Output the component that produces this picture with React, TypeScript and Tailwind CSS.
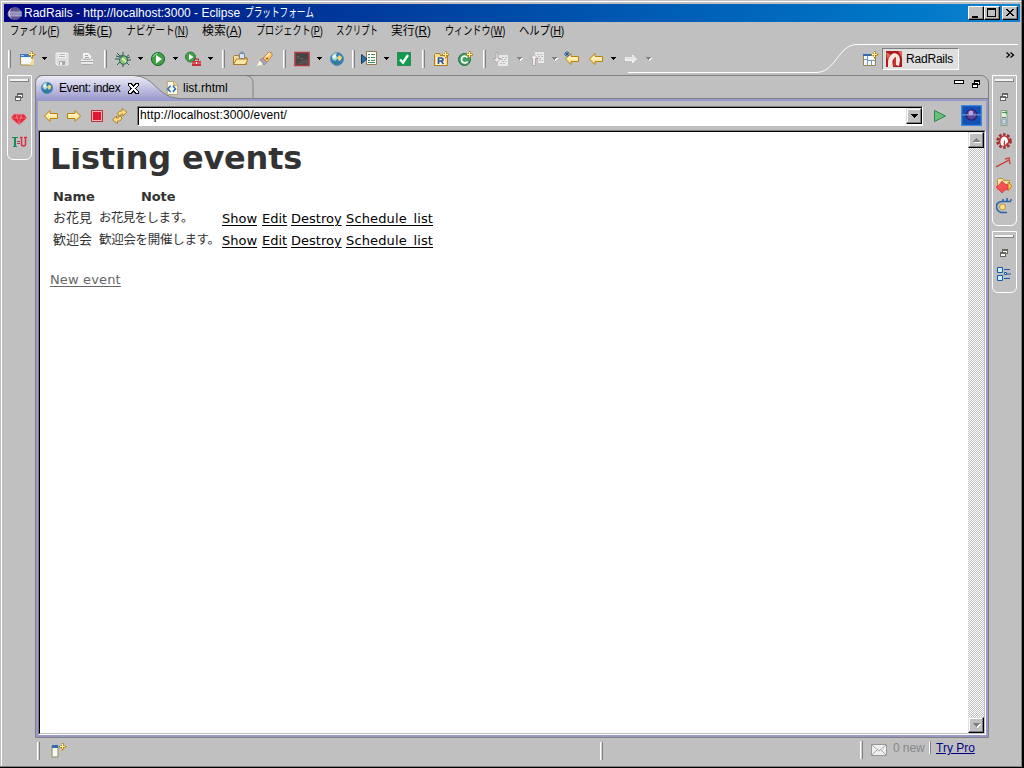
import type { ReactNode } from "react"
import clsx from "clsx"

const events = [
  { name: "お花見", note: "お花見をします。", fit: "tracking-[-0.6px]" },
  { name: "歓迎会", note: "歓迎会を開催します。", fit: "tracking-[-0.3px]" },
]

const menus = [
  { label: "ファイル", key: "F", box: "w-[63px]", fit: "scale-x-[0.78]" },
  { label: "編集", key: "E", box: "w-[53px]", fit: "scale-x-[0.98]" },
  { label: "ナビゲート", key: "N", box: "w-[76px]", fit: "scale-x-[0.81]" },
  { label: "検索", key: "A", box: "w-[54px]", fit: "scale-x-[0.99]" },
  { label: "プロジェクト", key: "P", box: "w-[80px]", fit: "scale-x-[0.76]" },
  { label: "スクリプト", key: "", box: "w-[55px]", fit: "scale-x-[0.7]" },
  { label: "実行", key: "R", box: "w-[54px]", fit: "scale-x-[0.98]" },
  { label: "ウィンドウ", key: "W", box: "w-[74px]", fit: "scale-x-[0.76]" },
  { label: "ヘルプ", key: "H", box: "w-[60px]", fit: "scale-x-[0.86]" },
]

function Icon({ className, size = 16, children }: { className?: string; size?: number; children: ReactNode }) {
  return (
    <svg width={size} height={size} viewBox="0 0 16 16" fill="none" className={clsx("shrink-0", className)}>
      {children}
    </svg>
  )
}

function Drop({ className, off }: { className?: string; off?: boolean }) {
  return (
    <svg width="6" height="4" viewBox="0 0 6 4" shapeRendering="crispEdges" className={clsx("-mr-px shrink-0", className)}>
      {off && <path d="M1 1h5v1h-1v1h-1v1h-1v-1h-1z" fill="#fff" />}
      <path d="M0 0h5v1h-1v1h-1v1h-1v-1h-1v-1h-1z" fill={off ? "#808080" : "#000"} />
    </svg>
  )
}

function Sep({ className }: { className?: string }) {
  return <div className={clsx("h-[18px] w-[3px] shrink-0 border-r border-l border-r-[#808080] border-l-white bg-[#d0d0d0]", className)} />
}

// small four-point sparkle used on the "new ..." icons
function Spark({ x, y }: { x: number; y: number }) {
  return (
    <g transform={`translate(${x} ${y})`} shapeRendering="crispEdges">
      <path d="M3 0h1v2h1v1h2v1h-2v1h-1v2h-1v-2h-1v-1h-2v-1h2v-1h1z" fill="#a87800" stroke="#b8860b" strokeWidth=".6" />
      <path d="M3 1h1v2h2v1h-2v2h-1v-2h-2v-1h2z" fill="#fff3b0" />
    </g>
  )
}

function NewIcon({ className }: { className?: string }) {
  return (
    <Icon className={className}>
      <path d="M.5 3.500h12v10.500h-12z" fill="#e8f6ff" stroke="#b08a3c" />
      <path d="M0 3h11v3H0z" fill="#3c78c8" />
      <path d="M1 4h3v1H1z" fill="#a8d0f8" />
      <path d="M2 7h9v6H3z" fill="#fff" opacity=".8" />
      <path d="M8 14q4-2 4-6l2-1v7z" fill="#f0dc98" />
      <Spark x={8} y={0} />
    </Icon>
  )
}

function SaveIcon({ className }: { className?: string }) {
  return (
    <Icon className={className}>
      <path d="M2 2h12v12H3l-1-1z" fill="#dcdcdc" stroke="#eee" />
      <path d="M4 2h8v5H4z" fill="#f4f4f4" />
      <path d="M5 3.500h6M5 5.500h6" stroke="#b4b4b4" />
      <path d="M5 10h6v4H5z" fill="#a8a8a8" />
      <path d="M6 11h2v3H6z" fill="#f4f4f4" />
    </Icon>
  )
}

function PrintIcon({ className }: { className?: string }) {
  return (
    <Icon className={className}>
      <path d="M4.500 7.500v-5h5l2 2v3" fill="#eee" stroke="#f8f8f8" />
      <path d="M6 4.500h3M6 6.500h4" stroke="#aaa" />
      <path d="M2 8h12v5H2z" fill="#e8e8e8" />
      <path d="M2 10.500h12M3 13.500h10" stroke="#a8a8a8" />
      <path d="M4 8.500h8" stroke="#b8b8b8" />
    </Icon>
  )
}

function BugIcon({ className }: { className?: string }) {
  return (
    <Icon className={className}>
      <path d="M5 5L2 2M8 5V1M11 6l3-2M4 8H0M12 9h4M5 11l-3 3M8 12v4M11 11l3 3M5 6L1 5M12 7l3-1" stroke="#24544c" />
      <ellipse cx="8.500" cy="9" rx="3.800" ry="4.200" fill="#8cc878" stroke="#245c54" />
      <path d="M7 7l4 4" stroke="#e8f8b0" strokeWidth="1.500" />
      <circle cx="6" cy="5.500" r="1.700" fill="#3c8078" />
    </Icon>
  )
}

function RunIcon({ className }: { className?: string }) {
  return (
    <Icon className={className}>
      <circle cx="8" cy="8" r="6.600" fill="#43a047" stroke="#1c6b30" />
      <path d="M3 6q1-3 5-4" stroke="#98d898" />
      <path d="M6 4l6 4-6 4.500z" fill="#fff" />
    </Icon>
  )
}

function ExternalIcon({ className }: { className?: string }) {
  return (
    <Icon className={className}>
      <circle cx="5.500" cy="6" r="5" fill="#43a047" stroke="#2c7b40" />
      <path d="M4 3l4.500 3L4 9z" fill="#fff" />
      <path d="M9.500 9.500V8h4v1.500" stroke="#a01820" />
      <path d="M7 10h9v5H7z" fill="#c83038" />
      <path d="M7 12h9" stroke="#f08c8c" />
      <path d="M11 11h1v2h-1z" fill="#fff" />
    </Icon>
  )
}

function FolderIcon({ className }: { className?: string }) {
  return (
    <Icon className={className}>
      <path d="M1.500 13.500V5.500l1-1h4l1 2h7v7z" fill="#f5dc98" stroke="#b07820" />
      <path d="M7.500 2.500h5v5h-5z" fill="#d8e4f4" stroke="#7088a8" />
      <path d="M9 2V1h2v1" stroke="#7088a8" />
      <path d="M1.500 13.500l3-5.500H16l-2.500 5.500z" fill="#fbe6a2" stroke="#b07820" />
    </Icon>
  )
}

function TorchIcon({ className }: { className?: string }) {
  return (
    <Icon className={className}>
      <path d="M0 15l3-6 4 4z" fill="#fff8d8" />
      <path d="M3 9l3-2 4 4-3 3z" fill="#a8a4b8" stroke="#786c78" strokeWidth=".6" />
      <path d="M6 7l6-6 3 1v3l-5 6z" fill="#f8c878" stroke="#b87828" strokeWidth=".8" />
      <path d="M9 6l4-4" stroke="#fff0c0" strokeWidth="1.500" />
      <path d="M9 7.500h2" stroke="#b04020" strokeWidth="1.500" />
    </Icon>
  )
}

function ConsoleIcon({ className }: { className?: string }) {
  return (
    <Icon className={className}>
      <path d="M1 1.500h14v13H1z" fill="#444" stroke="#b03c40" strokeWidth="1.600" />
      <path d="M3 5l2 1-2 1M6 7.500h3" stroke="#686868" />
      <path d="M2 13l6-4 6-1v5z" fill="#585050" />
    </Icon>
  )
}

function GlobeIcon({ className, size }: { className?: string; size?: number }) {
  return (
    <Icon className={className} size={size}>
      <circle cx="8" cy="8" r="6.500" fill="#3478b8" stroke="#5a8fb8" />
      <path d="M3 5q2-4 5-3l-1 3 2 2-3 3-3-2z" fill="#a8dcc0" />
      <path d="M10 4l3 2-1 3-2 1-2-3z" fill="#e8d878" />
      <path d="M6 11l3 1-1 2-3-1z" fill="#2c8c58" />
      <circle cx="5.500" cy="5.500" r="1.800" fill="#e4f6ff" />
    </Icon>
  )
}

function RunFormIcon({ className }: { className?: string }) {
  return (
    <Icon className={className}>
      <path d="M5.500.5h10v13h-10z" fill="#fff" stroke="#907c48" />
      <path d="M7 3.500h2M10 3.500h4M7 6.500h2M10 6.500h4M7 9.500h2M10 9.500h4M7 11.500h7" stroke="#3c8858" />
      <path d="M.5 3.500L6 8l-5.500 4.500z" fill="#2c70a8" stroke="#183c60" />
    </Icon>
  )
}

function CheckIcon({ className }: { className?: string }) {
  return (
    <Icon className={className}>
      <path d="M1 1h14v14H1z" fill="#0c9c4c" />
      <path d="M1.500 1.500h13v13h-13z" stroke="#34885c" />
      <path d="M4 8.500L7 11.500 12 4" stroke="#fff" strokeWidth="2.400" />
    </Icon>
  )
}

function RubyProjectIcon({ className }: { className?: string }) {
  return (
    <Icon className={className}>
      <path d="M1.500 14.500V3.500l1-1h4l1 2h7v10z" fill="#f8dc90" stroke="#b07820" />
      <path d="M3 6h9v8H3z" fill="#fff4d0" />
      <path d="M5.500 13V7H8q2 0 2 1.500T8 10H6m2 0l2.500 3" stroke="#2c5898" strokeWidth="1.700" />
      <Spark x={9} y={0} />
    </Icon>
  )
}

function ClassIcon({ className }: { className?: string }) {
  return (
    <Icon className={className}>
      <circle cx="7.500" cy="8.500" r="6" fill="#43a063" stroke="#207040" />
      <path d="M10.500 6.500Q9 5 7.500 5 4.500 5.500 4.500 8.500T7.500 12q2 0 3-1.500" stroke="#fff" strokeWidth="1.600" />
      <Spark x={9} y={0} />
    </Icon>
  )
}

function AnnotationIcon({ className, up }: { className?: string; up?: boolean }) {
  return (
    <Icon className={className}>
      <path d={up ? "M6 1h9v11H9V7H6z" : "M6 4h9v11H5v-4z"} fill="#e8e8e8" />
      <path d={up ? "M8 3.500h5M9 5.500h5M10 7.500h3M10 9.500h4" : "M9 6.500h5M8 8.500h5M9 10.500h4M7 12.500h5"} stroke="#bcbcbc" strokeDasharray="2 1" />
      {up ? (
        <path d="M1 7.500l4-4 4 4H6.500v7h-3v-7z" fill="#f0ecec" stroke="#a89c9c" strokeWidth=".8" />
      ) : (
        <path d="M3 1.500h2v6h3l-4 4-4-4h3z" fill="#f0ecec" stroke="#a89c9c" strokeWidth=".8" />
      )}
    </Icon>
  )
}

function ArrowIcon({ className, flip, off, star }: { className?: string; flip?: boolean; off?: boolean; star?: boolean }) {
  return (
    <Icon className={className}>
      <g transform={flip ? "translate(16 0) scale(-1 1)" : undefined}>
        <path
          d={off ? "M2.500 8L6.500 4v2.500h7v3h-7V12z" : "M1.500 8L7 2.500V5.500h7.500v5H7V13.500z"}
          fill={off ? "#e8e8e8" : "#ffe9a0"}
          stroke={off ? "#f4f4f4" : "#b8800c"}
          strokeLinejoin="round"
        />
        <path d="M3.500 8L6 5.500V7h7" stroke={off ? "#e0d8d8" : "#fffbe0"} />
      </g>
      {star && <path d="M3 0v6M0 3h6M1 1l4 4M5 1L1 5" stroke="#245c98" strokeWidth=".9" />}
    </Icon>
  )
}

function PerspectiveIcon({ className }: { className?: string }) {
  return (
    <Icon className={className}>
      <path d="M.5 3.500h12v11H.5z" fill="#f4f8ff" stroke="#98844c" />
      <path d="M0 3h9v2H0z" fill="#3468b0" />
      <path d="M4.500 5v9M4.500 9.500h8M1 8.500h3M8.500 10v4" stroke="#7c94b0" />
      <Spark x={8} y={0} />
    </Icon>
  )
}

function RestoreIcon({ dark, className }: { dark?: boolean; className?: string }) {
  const c = dark ? "#000" : "#686460"
  return (
    <svg width="8" height="8" viewBox="0 0 8 8" shapeRendering="crispEdges" className={clsx("shrink-0", className)}>
      <path d="M2 0h6v5H2z" fill={c} />
      <path d="M3 2h4v2H3z" fill="#fff" />
      <path d="M0 3h6v5H0z" fill={c} />
      <path d="M1 5h4v2H1z" fill="#fff" />
    </svg>
  )
}

function EclipseLogo() {
  return (
    <Icon className="ml-[3px]" size={15}>
      <circle cx="8.500" cy="8" r="7" fill="#5c5490" />
      <path d="M5 2a7 7 0 0 0 0 12A10 10 0 0 1 5 2z" fill="#f0c8a0" />
      <path d="M1 6.500h15M.5 8.500h15.500M1 10.500h15" stroke="#e0e0f4" strokeWidth=".9" />
    </Icon>
  )
}

function CaptionButton({ className, children }: { className?: string; children: ReactNode }) {
  return (
    <div className={clsx("h-[14px] w-[16px] border border-t-white border-r-black border-b-black border-l-white bg-[#c0c0c0] shadow-[inset_-1px_-1px_0_#808080]", className)}>
      <svg width="14" height="12" viewBox="0 0 14 12" shapeRendering="crispEdges" fill="none">
        {children}
      </svg>
    </div>
  )
}

function TitleBar() {
  return (
    <div className="flex h-[18px] items-center bg-linear-to-r from-[#000080] to-[#1084d0] text-white">
      <EclipseLogo />
      <span className="ml-[2px] w-[221px] shrink-0 whitespace-nowrap text-[12px]">RadRails - http://localhost:3000 - Eclipse </span>
      <span className="origin-left scale-x-[0.72] whitespace-nowrap">プラットフォーム</span>
      <CaptionButton className="ml-auto">
        <path d="M3 9h6v2H3z" fill="#000" />
      </CaptionButton>
      <CaptionButton>
        <path d="M2 1h9v9H2zM3 3v6h7V3z" fill="#000" fillRule="evenodd" />
      </CaptionButton>
      <CaptionButton className="mr-[2px] ml-[2px]">
        <path d="M3 2h2v1h1v1h2V3h1V2h2v1h-1v1H9v1H8v1h1v1h1v1h1v1H9V8H8V7H6v1H5v1H3V8h1V7h1V6h1V5H5V4H4V3H3z" fill="#000" />
      </CaptionButton>
    </div>
  )
}

function MenuBar() {
  return (
    <div className="flex h-[19px] items-start pl-[6px]">
      {menus.map((m) => (
        <div key={m.label} className={clsx("shrink-0", m.box)}>
          <span className={clsx("inline-block origin-left whitespace-nowrap leading-[19px]", m.fit)}>
            {m.label}
            {m.key && (
              <>
                (<u>{m.key}</u>)
              </>
            )}
          </span>
        </div>
      ))}
    </div>
  )
}

function ToolBar() {
  return (
    <div className="relative flex h-[34px] items-center pt-px pl-[4px]">
      <svg className="absolute top-0 left-0" width="1016" height="34" fill="none">
        <path d="M624 31.500H812C832 31.500 834 3.500 853 3.500H1014" stroke="#fff" />
      </svg>
      <Sep />
      <NewIcon className="ml-[9px]" />
      <Drop className="ml-[6px]" />
      <SaveIcon className="ml-[7px]" />
      <PrintIcon className="ml-[9px]" />
      <Sep className="ml-[9px]" />
      <BugIcon className="ml-[8px]" />
      <Drop className="ml-[7px]" />
      <RunIcon className="ml-[7px]" />
      <Drop className="ml-[7px]" />
      <ExternalIcon className="ml-[7px]" />
      <Drop className="ml-[7px]" />
      <Sep className="ml-[9px]" />
      <FolderIcon className="ml-[7px]" />
      <TorchIcon className="ml-[9px]" />
      <Sep className="ml-[10px]" />
      <ConsoleIcon className="ml-[8px]" />
      <Drop className="ml-[7px]" />
      <GlobeIcon className="ml-[7px]" />
      <Sep className="ml-[7px]" />
      <RunFormIcon className="ml-[6px]" />
      <Drop className="ml-[7px]" />
      <CheckIcon className="ml-[7px]" />
      <Sep className="ml-[10px]" />
      <RubyProjectIcon className="ml-[8px]" />
      <ClassIcon className="ml-[8px]" />
      <Sep className="ml-[10px]" />
      <AnnotationIcon className="ml-[7px]" />
      <Drop off className="ml-[8px]" />
      <AnnotationIcon up className="ml-[7px]" />
      <Drop off className="ml-[7px]" />
      <ArrowIcon star className="ml-[7px]" />
      <ArrowIcon className="ml-[8px]" />
      <Drop className="ml-[7px]" />
      <ArrowIcon flip off className="ml-[7px]" />
      <Drop off className="ml-[7px]" />
      <PerspectiveIcon className="ml-[212px]" />
      <div className="ml-[3px] flex h-[22px] w-[77px] shrink-0 items-center border border-t-[#808080] border-r-white border-b-white border-l-[#808080] bg-[#dfdfdf] pl-[3px]">
        <Icon>
          <path d="M0 0h16v16H0z" fill="#a81c1c" />
          <path d="M2 16Q1 4 8 2q6 1 6 7l-1 6-3-1V6q-5 2-3 10z" fill="#f8e8e0" />
          <path d="M8 7l2-1v9H7z" fill="#c83830" />
          <path d="M0 1l5 3-4 4zM12 0h4v7z" fill="#d86858" />
        </Icon>
        <span className="ml-[4px] pt-px whitespace-nowrap tracking-[-0.2px]">RadRails</span>
      </div>
      <svg width="9" height="7" viewBox="0 0 9 7" fill="none" className="mt-[-6px] ml-[47px] shrink-0">
        <path d="M.5.5l3 2.500-3 2.500M4.500.5l3 2.500-3 2.500" stroke="#000" strokeWidth="1.300" />
      </svg>
    </div>
  )
}

function Trim({ className, children }: { className?: string; children: ReactNode }) {
  return (
    <div className={clsx("flex w-[25px] flex-col items-center rounded-b-[6px] border border-white pt-[3px] pr-px", className)}>
      <div className="h-[3px] w-[19px] shrink-0 border-r border-b border-[#808080] bg-[#f4f4f4]" />
      {children}
    </div>
  )
}

function LeftTrim() {
  return (
    <div className="w-[31px] shrink-0 pl-[3px]">
      <Trim className="h-[85px]">
        <RestoreIcon className="mt-[11px]" />
        <Icon className="mt-[10px]">
          <path d="M3 3h10l3 4-8 7-8-7z" fill="#e02838" stroke="#f09098" strokeWidth=".7" />
          <path d="M0 7h16M5 3l3 10 3-10M5 7l3-4 3 4" stroke="#f8a0a8" strokeWidth=".5" />
        </Icon>
        <Icon className="mt-[7px]">
          <path d="M1 3h6v1H5v8h1v1H2v-1h1V4H1z" fill="#188c58" />
          <path d="M6 7h3v1H6zM6 9h3v1H6z" fill="#b04050" />
          <path d="M9 3.500h2.500M13 3.500h3M10.500 4v6q0 2 2 2t2-2V4" stroke="#e02c40" strokeWidth="1.500" />
        </Icon>
      </Trim>
    </div>
  )
}

function RightTrims() {
  return (
    <div className="flex w-[32px] flex-col gap-[5px] pl-[3px]">
      <Trim className="h-[151px]">
        <RestoreIcon className="mt-[11px]" />
        <Icon className="mt-[9px]">
          <path d="M5 .5h6v15H5z" fill="#e4efe0" stroke="#88a080" />
          <path d="M6 2.500h3M6 7.500h4" stroke="#608868" />
          <path d="M9 1.500h2v2H9z" fill="#18b040" />
          <path d="M6 9h4v5H6z" fill="#c8d8f0" stroke="#8098b8" />
        </Icon>
        <Icon className="mt-[7px]">
          <circle cx="8" cy="8" r="6.300" stroke="#a82c30" strokeWidth="3" strokeDasharray="2.500 1.500" />
          <circle cx="8" cy="8" r="5.500" fill="#b83838" />
          <path d="M5 12Q3 5 8 3.500 12 4 12 9L9 12V7q-2 1-1 6z" fill="#fff" />
        </Icon>
        <Icon className="mt-[6px]">
          <path d="M0 12l13-7" stroke="#c83428" strokeWidth="1.300" />
          <path d="M9 4l4-1 1 6" stroke="#d84838" strokeWidth="1.500" />
        </Icon>
        <Icon className="mt-[6px]">
          <path d="M1.500 12.500V2.500l1-1h4l1 2h6v9z" fill="#fbe8a8" stroke="#c08c30" />
          <path d="M16 9l-4-4v3H9v3h3v3z" fill="#f8c840" stroke="#a87010" strokeWidth=".7" />
          <path d="M0 10l3-2 3-4 3 3 3 1v4l-3 1-3 3-3-3z" fill="#f45058" stroke="#d83038" strokeWidth=".7" />
        </Icon>
        <Icon className="mt-[5px]">
          <path d="M11 14.500H5Q.5 13 .5 8.500T6 3.500h9M7 3V1M11 3V0M15 3V1" stroke="#2860a8" strokeWidth="1.500" />
          <circle cx="6.500" cy="9" r="3" fill="#f4e090" stroke="#c09030" />
        </Icon>
      </Trim>
      <Trim className="h-[62px]">
        <RestoreIcon className="mt-[11px]" />
        <Icon className="mt-[9px]">
          <path d="M1.500 1.500h5v5h-5zM1.500 9.500h5v5h-5z" fill="#c8f0ff" stroke="#1858a8" />
          <path d="M8 3.500h6M8 12.500h6M11 8h4" stroke="#1858a8" />
          <path d="M8.500 6.500h2v2h-2z" fill="#c8f0ff" stroke="#1858a8" />
        </Icon>
      </Trim>
    </div>
  )
}

function Tabs() {
  return (
    <div className="relative flex h-[23px] items-center">
      <svg className="absolute top-[-1px] left-[-1px]" width="222" height="25" fill="none">
        <defs>
          <linearGradient id="tab" x1="0" y1="0" x2="0" y2="1">
            <stop offset="0" stopColor="#eeeef8" />
            <stop offset="1" stopColor="#9999cc" />
          </linearGradient>
        </defs>
        <path d="M0 25V7Q2 .5 8 .5H98C120 .5 122 22.500 144 23.500V25z" fill="url(#tab)" />
        <path d="M.5 25V7Q2 .5 8 .5H98C120 .5 122 22.500 144 23.500" stroke="#808080" />
        <path d="M211 .5q7 1 7 7v16" stroke="#808080" />
      </svg>
      <div className="relative flex w-[121px] items-center pl-[4px]">
        <GlobeIcon size={14} />
        <span className="ml-[5px] w-[66px] whitespace-nowrap tracking-[-0.4px]">Event: index</span>
        <svg width="11" height="11" viewBox="0 0 11 11" shapeRendering="crispEdges" className="mt-px ml-[3px] shrink-0">
          <path d="M0 0h4l1.500 2L7 0h4v2L8.500 5.500 11 9v2H7L5.500 9 4 11H0V9l2.500-3.500L0 2z" fill="#000" />
          <path d="M1 1h2l2.500 3L8 1h2v1L7 5.500 10 9v1H8L5.500 7 3 10H1V9l3-3.500L1 2z" fill="#fff" />
        </svg>
      </div>
      <Icon className="relative ml-[8px]" size={14}>
        <path d="M2.500.5h8l4 4v11h-12z" fill="#fbfbf4" stroke="#b09858" />
        <path d="M10 .5V5h4.500" fill="#f4d488" stroke="#b09858" />
        <path d="M6.500 5.500L3 9l3.500 3.500M9 5.500l3 3.500-3 3.500" stroke="#3470b0" strokeWidth="1.800" />
      </Icon>
      <span className="relative ml-[4px] whitespace-nowrap">list.rhtml</span>
      <svg width="10" height="5" shapeRendering="crispEdges" className="mt-[-11px] mr-[8px] ml-auto">
        <path d="M0 0h10v4H0z" fill="#000" />
        <path d="M1 1h8v2H1z" fill="#fff" />
      </svg>
      <RestoreIcon dark className="mt-[-8px] mr-[8px]" />
    </div>
  )
}

function AddressBar() {
  return (
    <div className="flex h-[29px] shrink-0 items-center pl-[5px]">
      <ArrowIcon />
      <ArrowIcon flip className="ml-[7px]" />
      <Icon className="ml-[7px]">
        <path d="M2.500 2.500h11v11h-11z" fill="#f4b0b0" stroke="#b83038" />
        <path d="M4 4h8v8H4z" fill="#e01830" />
      </Icon>
      <Icon className="ml-[7px]">
        <path d="M6 7q-1-4 4-4V.5L15 4l-4 4V6Q8.500 5.500 8.500 8z" fill="#fbdc80" stroke="#a87414" strokeWidth=".8" />
        <path d="M9.500 8.500q1 5-4 4.500v2.500L.5 12l4-4v2Q7 10.500 7 8z" fill="#fbdc80" stroke="#a87414" strokeWidth=".8" />
      </Icon>
      <div className="ml-[9px] flex h-[20px] w-[786px] shrink-0 border border-t-[#808080] border-r-white border-b-white border-l-[#808080]">
        <div className="flex flex-1 border-t border-l border-black bg-white">
          <span className="ml-[1px] flex-1 text-[12px] leading-[14px] tracking-[0.13px]">http://localhost:3000/event/</span>
          <div className="flex h-[16px] w-[16px] items-center justify-center border border-t-[#dfdfdf] border-r-black border-b-black border-l-[#dfdfdf] bg-[#c0c0c0] shadow-[inset_-1px_-1px_0_#808080,inset_1px_1px_0_#fff]">
            <svg width="7" height="4" shapeRendering="crispEdges">
              <path d="M0 0h7v1H6v1H5v1H4v1H3V3H2V2H1V1H0z" fill="#000" />
            </svg>
          </div>
        </div>
      </div>
      <Icon className="ml-[9px]">
        <path d="M2.500 2.500l11 5.500-11 5.500z" fill="#68c080" stroke="#288848" />
      </Icon>
      <Icon className="ml-[13px]" size={21}>
        <path d="M0 0h16v16H0z" fill="#1450b4" />
        <path d="M.5.5h15v15H.5z" stroke="#3c88dc" />
        <circle cx="8" cy="7.500" r="4" fill="#604898" stroke="#282078" />
        <circle cx="7.500" cy="6" r="1.800" fill="#b8a8dc" />
        <path d="M1 7.500h14" stroke="#a8c0f4" strokeWidth=".6" />
      </Icon>
    </div>
  )
}

function ScrollButton({ down }: { down?: boolean }) {
  return (
    <div className="flex h-[16px] w-[16px] items-center justify-center border border-t-[#dfdfdf] border-r-black border-b-black border-l-[#dfdfdf] bg-[#c0c0c0] shadow-[inset_-1px_-1px_0_#808080,inset_1px_1px_0_#fff]">
      <svg width="8" height="5" shapeRendering="crispEdges" className="ml-px">
        {down ? (
          <>
            <path d="M1 1h7v1H7v1H6v1H5v1H4z" fill="#fff" />
            <path d="M0 0h7v1H6v1H5v1H4v1H3V3H2V2H1V1H0z" fill="#808080" />
          </>
        ) : (
          <>
            <path d="M1 4h7v1H1z" fill="#fff" />
            <path d="M3 0h1v1h1v1h1v1h1v1H0V3h1V2h1V1h1z" fill="#808080" />
          </>
        )}
      </svg>
    </div>
  )
}

function WebPage() {
  return (
    <div className="flex-1 bg-white pl-[10px] font-['DejaVu_Sans','Noto_Sans_CJK_JP',sans-serif] text-[13px] text-[#333]">
      <h1 className="mt-[7px] h-[39px] whitespace-nowrap text-[32px] leading-[38px] font-bold tracking-[-0.2px] [clip-path:inset(9px_0_0_0)]">
        Listing events
      </h1>
      <div className="mt-[8px] ml-[3px] grid grid-cols-[46px_123px_40px_29px_55px_120px] auto-rows-[22px] text-[13px] leading-[22px] whitespace-nowrap">
        <b className="text-[13px] tracking-[-0.1px]">Name</b>
        <b className="col-span-5 pl-[42px] text-[13px] tracking-[-0.1px]">Note</b>
        {events.map((e) => (
          <div key={e.name} className="contents">
            <span className="text-[13px] leading-[20px]">{e.name}</span>
            <span className={clsx("text-[12.500px] leading-[20px]", e.fit)}>{e.note}</span>
            <a className="text-black underline underline-offset-2">Show</a>
            <a className="text-black underline underline-offset-2">Edit</a>
            <a className="text-black underline underline-offset-2">Destroy</a>
            <a className="justify-self-start tracking-[0.13px] text-black underline underline-offset-2">Schedule_list</a>
          </div>
        ))}
      </div>
      <a className="mt-[18px] block leading-[20px] tracking-[0.15px] text-[#666] underline underline-offset-2">New event</a>
    </div>
  )
}

function Editor() {
  return (
    <div className="flex w-[954px] shrink-0 flex-col rounded-tl-[7px] rounded-tr-[8px] border border-[#808080]">
      <Tabs />
      <div className="flex flex-1 flex-col border-x-2 border-t-2 border-b-2 border-[#9999cc] shadow-[0_-1px_0_#808080]">
        <AddressBar />
        <div className="flex flex-1 border border-t-[#808080] border-r-white border-b-white border-l-[#808080]">
          <div className="flex flex-1 border border-t-black border-r-[#c0c0c0] border-b-[#c0c0c0] border-l-black">
            <WebPage />
            <div className="flex w-[16px] flex-col justify-between bg-[#dfdfdf] bg-[conic-gradient(#c0c0c0_25%,#fff_0_50%,#c0c0c0_0_75%,#fff_0)] bg-size-[2px_2px]">
              <ScrollButton />
              <ScrollButton down />
            </div>
          </div>
        </div>
      </div>
    </div>
  )
}

function StatusBar() {
  return (
    <div className="flex flex-1 items-start pt-[4px] pl-[33px]">
      <Sep />
      <Icon className="ml-[11px]">
        <path d="M1 4h6v11H1z" fill="#f0fbf8" stroke="#988850" />
        <path d="M1 3h6v3H1z" fill="#3468b8" />
        <Spark x={8} y={1} />
      </Icon>
      <Sep className="ml-[533px]" />
      <Sep className="mt-[-1px] ml-[257px] h-[13px]" />
      <svg width="16" height="12" viewBox="0 0 16 12" fill="none" className="mt-[2px] ml-[8px]">
        <path d="M.5.5h15v11H.5z" fill="#f0f0f0" stroke="#989898" />
        <path d="M1 1l7 6 7-6M1 11l5-5M15 11l-5-5" stroke="#a8a8a8" />
      </svg>
      <span className="mt-[-2px] ml-[6px] w-[36px] leading-[16px] tracking-[-0.1px] whitespace-nowrap text-[#84888c]">0 new</span>
      <div className="mt-[-1px] h-[13px] w-[2px] border-r border-[#808080] bg-white" />
      <a className="mt-[-2px] ml-[5px] leading-[16px] whitespace-nowrap text-[#000080] underline">Try Pro</a>
    </div>
  )
}

export default function App() {
  return (
    <div className="h-[768px] w-[1024px] overflow-hidden border-r-2 border-b border-black bg-[#c0c0c0] font-['Liberation_Sans','Noto_Sans_CJK_JP',sans-serif] text-[12px] leading-[16px] text-black">
      <div className="h-full border-r border-b border-[#808080] pt-px pl-px">
        <div className="flex h-full flex-col border-t border-l border-white pt-[2px] pr-px pl-[2px]">
          <TitleBar />
          <MenuBar />
          <ToolBar />
          <div className="flex h-[663px]">
            <LeftTrim />
            <Editor />
            <RightTrims />
          </div>
          <StatusBar />
        </div>
      </div>
    </div>
  )
}
